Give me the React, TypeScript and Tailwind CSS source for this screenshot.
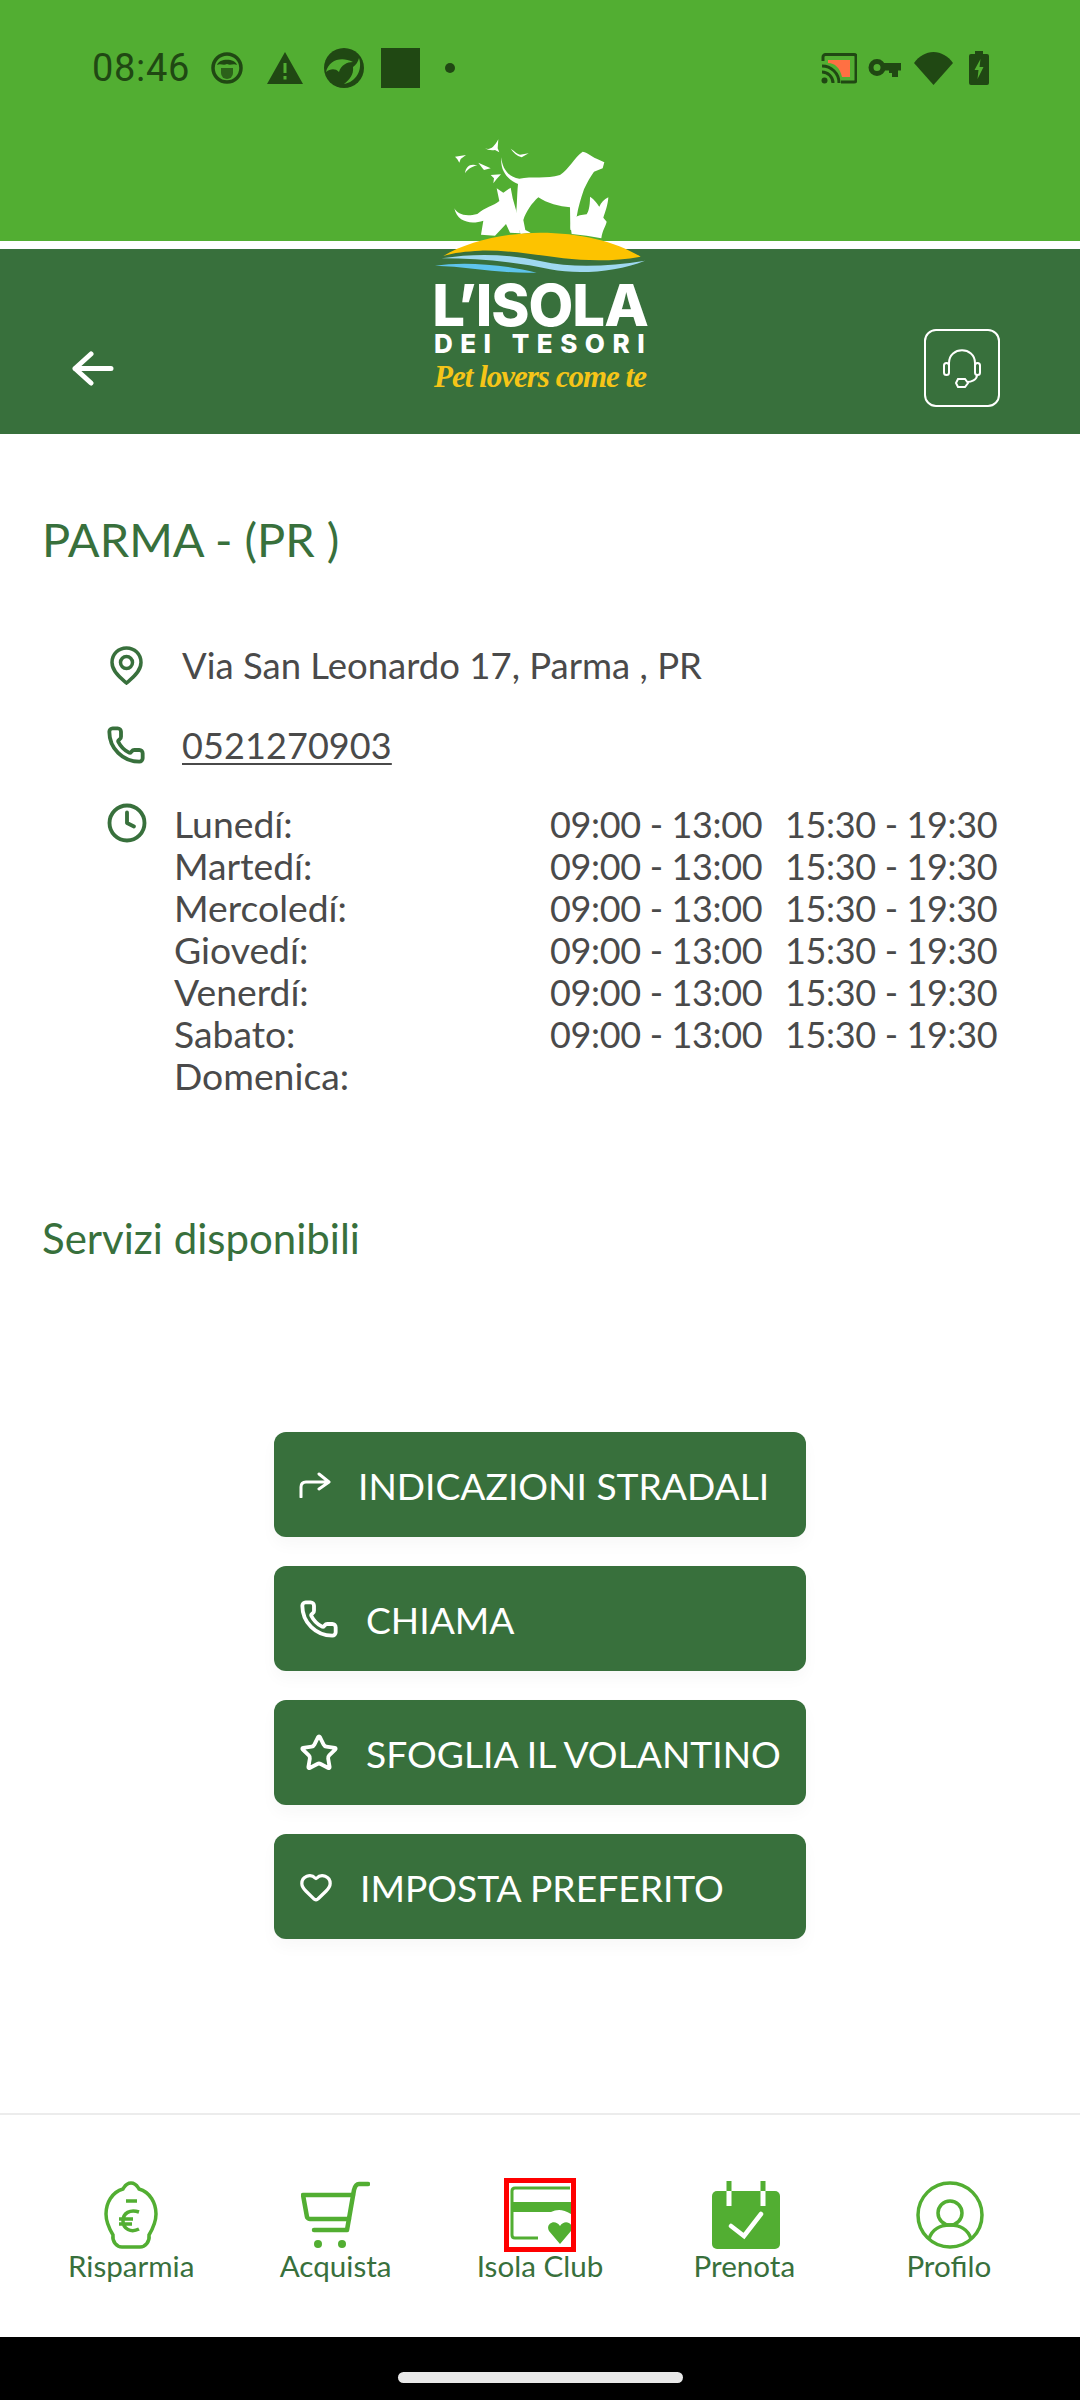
import { Clock, Heart, Phone, Star } from 'lucide-react'

const hours = [
  { day: 'Lunedí:', am: '09:00 - 13:00', pm: '15:30 - 19:30' },
  { day: 'Martedí:', am: '09:00 - 13:00', pm: '15:30 - 19:30' },
  { day: 'Mercoledí:', am: '09:00 - 13:00', pm: '15:30 - 19:30' },
  { day: 'Giovedí:', am: '09:00 - 13:00', pm: '15:30 - 19:30' },
  { day: 'Venerdí:', am: '09:00 - 13:00', pm: '15:30 - 19:30' },
  { day: 'Sabato:', am: '09:00 - 13:00', pm: '15:30 - 19:30' },
  { day: 'Domenica:', am: '', pm: '' },
]

function StatusLeft() {
  return (
    <div className="flex items-center">
      <span className="w-[97px] text-[38px] leading-[48px] tracking-[0.7px] text-[#204813] font-['Roboto',sans-serif]">08:46</span>
      <svg className="ml-[22px] w-[32px] h-[32px]" viewBox="0 0 32 32">
        <circle cx="16" cy="16" r="14" fill="none" stroke="#204813" strokeWidth="3.5" />
        <path d="M6 13 C8 6 24 6 26 13 C22 11 20 14 16 12 C12 14 10 11 6 13 Z" fill="#204813" />
        <path d="M10 16 h12 v5 a6 6 0 0 1 -12 0 Z" fill="#204813" opacity="0.75" />
      </svg>
      <svg className="ml-[24px] w-[36px] h-[32px]" viewBox="0 0 36 32">
        <path d="M18 0 L36 32 H0 Z" fill="#204813" />
        <rect x="16.5" y="11" width="3" height="10" fill="#52ae32" />
        <rect x="16.5" y="24" width="3" height="3.5" fill="#52ae32" />
      </svg>
      <svg className="ml-[21px] w-[40px] h-[40px]" viewBox="0 0 40 40">
        <circle cx="20" cy="20" r="20" fill="#204813" />
        <path d="M2 24 C5 12 17 8 29 14 C23 14 17 17 15 24 C11 20 6 21 2 24 Z" fill="#52ae32" />
        <path d="M35 10 C39 22 32 34 20 36 C25 32 30 27 29 19 C32 17 34 14 35 10 Z" fill="#52ae32" />
      </svg>
      <div className="ml-[17px] w-[39px] h-[40px] bg-[#204813]" />
      <div className="ml-[25px] w-[10px] h-[10px] rounded-full bg-[#204813]" />
    </div>
  )
}

function StatusRight() {
  return (
    <div className="flex items-center">
      <svg className="w-[36px] h-[31px]" viewBox="0 0 36 31">
        <path d="M2 8 V4 a2.5 2.5 0 0 1 2.5 -2.5 H33 a2 2 0 0 1 2 2 V27 a2 2 0 0 1 -2 2 H20" fill="none" stroke="#204813" strokeWidth="3" />
        <path d="M7 7 H29 V24 H21 C19 15 14 10 7 10 Z" fill="#ff7043" />
        <path d="M1 13 C10 13 18 20 18 30 M1 19 C7 19 12 24 12 30" fill="none" stroke="#204813" strokeWidth="3" />
        <circle cx="3.5" cy="27.5" r="3" fill="#204813" />
      </svg>
      <svg className="ml-[11px] w-[33px] h-[20px]" viewBox="0 0 33 20">
        <circle cx="9" cy="9.5" r="6" fill="none" stroke="#204813" strokeWidth="5" />
        <path d="M14 5 H33 V12.5 H30 V19 H24 V15 H21 V12.5 H14 Z" fill="#204813" />
      </svg>
      <svg className="ml-[13px] w-[39px] h-[33px]" viewBox="0 0 39 33">
        <path d="M19.5 33 L0 11 C5 4 12 0 19.5 0 C27 0 34 4 39 11 Z" fill="#204813" />
      </svg>
      <svg className="ml-[16px] w-[20px] h-[34px]" viewBox="0 0 20 34">
        <path d="M6 0 H14 V3 H18 a2 2 0 0 1 2 2 V32 a2 2 0 0 1 -2 2 H2 a2 2 0 0 1 -2 -2 V5 a2 2 0 0 1 2 -2 H6 Z" fill="#204813" />
        <path d="M11.5 8 L5.5 19 H9.5 L8.5 28 L14.5 16 H10.5 Z" fill="#52ae32" />
      </svg>
    </div>
  )
}

function Logo() {
  return (
    <div className="absolute left-1/2 top-[120px] -translate-x-1/2 w-[280px] flex flex-col items-center">
      <svg className="w-[280px] h-[165px]" viewBox="0 0 840 495">
        <g fill="#ffffff">
          <path d="M304 112 C306 145 325 172 358 176 C395 168 440 178 480 165 C505 150 525 110 548 95 C565 98 575 110 590 116 L613 127 L608 145 L582 155 C572 170 562 185 552 208 C542 238 535 260 530 290 L527 325 L511 330 L510 262 C480 260 440 250 415 232 C395 250 378 275 370 300 L376 330 L392 338 L362 342 L345 300 C352 270 350 230 354 192 C325 180 300 155 304 112 Z" />
          <path d="M163 265 C172 282 195 292 232 282 C255 262 280 258 298 243 L290 205 L310 218 L332 203 L338 235 L348 270 L360 340 L330 338 L318 312 L285 347 L243 344 L250 302 C215 314 172 308 163 265 Z" />
          <path d="M512 322 C512 295 530 285 560 283 C565 275 570 262 570 230 C585 240 592 252 598 260 C603 248 612 238 625 232 C624 255 614 280 610 293 L620 305 C617 320 607 330 604 355 L560 347 L515 342 Z" />
          <path d="M255 85 C270 90 280 85 295 58 L293 85 L298 97 L285 90 C275 92 262 90 255 85 Z" />
          <path d="M332 86 C345 95 352 102 360 104 L386 100 L365 112 C350 108 340 98 332 86 Z" />
          <path d="M165 110 L198 105 L182 117 L178 128 L172 118 Z" />
          <path d="M195 160 C198 138 210 130 232 136 C215 140 205 146 195 160 Z" />
          <path d="M235 128 L272 145 L252 150 L245 142 Z" />
          <path d="M272 165 L303 163 L290 177 L280 190 L282 175 Z" />
        </g>
        <path d="M130 408 C200 365 320 338 420 338 C540 338 650 365 722 410 C640 425 560 422 490 415 C400 403 320 390 240 392 C200 394 160 398 130 408 Z" fill="#fdc300" />
        <path d="M125 415 C230 398 330 403 420 423 C520 445 620 440 735 422 C650 455 540 465 450 448 C350 425 230 415 125 415 Z" fill="#9fd8f0" />
        <path d="M105 437 C180 425 300 430 410 458 C310 462 210 440 105 437 Z" fill="#5ec4ec" />
      </svg>
      <div className="text-[58px] leading-[40px] font-extrabold text-white tracking-[-1px] font-['Inter',sans-serif] whitespace-nowrap">L’ISOLA</div>
      <div className="mt-[10px] pl-[6px] text-[26px] leading-[18px] font-extrabold text-white tracking-[7.5px] font-['Inter',sans-serif] whitespace-nowrap">DEI TESORI</div>
      <div className="mt-[8px] text-[31px] leading-[32px] font-bold italic text-[#f5c518] tracking-[-1px] font-['Liberation_Serif',serif] whitespace-nowrap">Pet lovers come te</div>
    </div>
  )
}

function BackArrow() {
  return (
    <svg className="w-[42px] h-[35px]" viewBox="0 0 42 35" fill="none" stroke="#ffffff" strokeWidth="5" strokeLinecap="round" strokeLinejoin="round">
      <path d="M19 3 L3 17.5 L19 32 M3 17.5 H39" />
    </svg>
  )
}

function HeadsetIcon() {
  return (
    <svg className="w-[38px] h-[40px]" viewBox="0 0 38 40" fill="none" stroke="#ffffff" strokeWidth="2">
      <path d="M6 17 V15 C6 -2 32 -2 32 15 V17" />
      <rect x="1" y="15" width="5" height="12" rx="2.5" />
      <rect x="32" y="15" width="5" height="12" rx="2.5" />
      <path d="M34 27 C34 32 28 34 24 34" />
      <path d="M15 31 H22 L25 35 L22 39 H15 L13 35 Z" />
    </svg>
  )
}

function PinIcon() {
  return (
    <svg className="w-[33px] h-[39px]" viewBox="0 0 33 39" fill="none" stroke="#38703c" strokeWidth="3.5">
      <path d="M16.5 37 C12 33 2 26 2 16.5 C2 8 8.5 2 16.5 2 C24.5 2 31 8 31 16.5 C31 26 21 33 16.5 37 Z" />
      <circle cx="16.5" cy="16.5" r="6" />
    </svg>
  )
}

function TurnIcon() {
  return (
    <svg className="w-[32px] h-[26px]" viewBox="0 0 32 26" fill="none" stroke="#ffffff" strokeWidth="3" strokeLinecap="round" strokeLinejoin="round">
      <path d="M2 25 V15 C2 11 4 10 7 10 H29 M20 2 L30 10 L20 17" />
    </svg>
  )
}

const actions = [
  { label: 'INDICAZIONI STRADALI', icon: <TurnIcon /> },
  { label: 'CHIAMA', icon: <Phone className="w-[40px] h-[40px]" strokeWidth={2.3} /> },
  { label: 'SFOGLIA IL VOLANTINO', icon: <Star className="w-[40px] h-[40px]" strokeWidth={2.3} /> },
  { label: 'IMPOSTA PREFERITO', icon: <Heart className="w-[34px] h-[34px]" strokeWidth={2.3} /> },
]

function LemonIcon() {
  return (
    <svg className="w-[54px] h-[68px]" viewBox="0 0 54 68" fill="none" stroke="#52ae32" strokeWidth="3.5">
      <path d="M27 2 C32 2 33 5 35 8 C46 11 52 22 52 33 C52 42 48 49 45 54 C46 61 41 66 36 66 H18 C13 66 8 61 9 54 C6 49 2 42 2 33 C2 22 8 11 19 8 C21 5 22 2 27 2 Z" />
      <path d="M22 20 H33" />
      <path d="M35 31 C26 28 19 32 19 40 C19 48 27 52 35 48 M15 38 H29 M15 43 H28" />
    </svg>
  )
}

function CartIcon() {
  return (
    <svg className="w-[69px] h-[68px]" viewBox="0 0 69 68" fill="none" stroke="#52ae32" strokeWidth="4.5" strokeLinecap="round" strokeLinejoin="round">
      <path d="M67 3 H58 C55 3 54 5 53 9 L46 49 H13" />
      <path d="M52 14 H2 L6 36 C6 37 8 38 9 38 H48" />
      <circle cx="17" cy="63" r="4" fill="#52ae32" stroke="none" />
      <circle cx="41" cy="63" r="4" fill="#52ae32" stroke="none" />
    </svg>
  )
}

function CardIcon() {
  return (
    <div className="w-[72px] h-[74px] border-[5px] border-[#ff0000]">
      <svg className="w-[62px] h-[64px]" viewBox="0 0 62 64" fill="none">
        <path d="M61 5 H6 C4 5 3 6 3 8 V52 C3 54 4 55 6 55 H29" stroke="#52ae32" strokeWidth="3" />
        <path d="M2 19 H62 V31 C54 26 48 26 42 29 H2 Z" fill="#52ae32" />
        <path d="M51 61 L40 48 C36 41 46 35 51 43 C56 35 66 41 62 48 Z" fill="#52ae32" />
      </svg>
    </div>
  )
}

function CalendarIcon() {
  return (
    <svg className="ml-[3px] w-[68px] h-[68px]" viewBox="0 0 68 68">
      <rect x="0" y="10" width="68" height="58" rx="5" fill="#52ae32" />
      <path d="M17 0 V25 M51 0 V25" stroke="#ffffff" strokeWidth="5" />
      <path d="M17 0 V10 M51 0 V10" stroke="#52ae32" strokeWidth="5" />
      <path d="M19 45 L32 55 L49 33" stroke="#ffffff" strokeWidth="4.5" fill="none" strokeLinecap="round" />
    </svg>
  )
}

function ProfileIcon() {
  return (
    <svg className="ml-[2px] w-[68px] h-[68px]" viewBox="0 0 68 68" fill="none" stroke="#52ae32" strokeWidth="3.5">
      <circle cx="34" cy="34" r="32" />
      <circle cx="34" cy="32" r="12" />
      <path d="M13 58 C16 48 25 44 34 44 C43 44 52 48 55 58" />
    </svg>
  )
}

const navItems = [
  { label: 'Risparmia', icon: <LemonIcon /> },
  { label: 'Acquista', icon: <CartIcon /> },
  { label: 'Isola Club', icon: <CardIcon /> },
  { label: 'Prenota', icon: <CalendarIcon /> },
  { label: 'Profilo', icon: <ProfileIcon /> },
]

export default function App() {
  return (
    <div className="relative flex flex-col w-full h-[2400px] bg-white font-['Lato',sans-serif] text-[#4a4a4a] overflow-hidden">
      <header>
        <div className="h-[241px] bg-[#52ae32] pt-[44px]">
          <div className="flex items-center justify-between h-[48px] pl-[92px] pr-[91px]">
            <StatusLeft />
            <StatusRight />
          </div>
        </div>
        <div className="h-[8px] bg-white" />
        <div className="h-[185px] bg-[#38703c] flex items-start justify-between pl-[72px] pr-[80px] pt-[80px]">
          <div className="pt-[22px]">
            <BackArrow />
          </div>
          <button className="w-[76px] h-[78px] rounded-[12px] border-2 border-white flex items-center justify-center">
            <HeadsetIcon />
          </button>
        </div>
        <Logo />
      </header>

      <main className="flex-1 pt-[77px]">
        <h1 className="pl-[42px] text-[47px] leading-[56px] text-[#38703c]">PARMA - (PR )</h1>

        <div className="mt-[76px] pl-[110px] flex items-center h-[44px] text-[36.5px]">
          <PinIcon />
          <span className="ml-[39px]">Via San Leonardo 17, Parma , PR</span>
        </div>
        <div className="mt-[36px] pl-[106px] flex items-center h-[44px] text-[36px]">
          <Phone className="w-[40px] h-[40px] text-[#38703c]" strokeWidth={2.3} />
          <span className="ml-[36px] underline underline-offset-[4px] decoration-2 tracking-[0.1px]">0521270903</span>
        </div>

        <div className="mt-[36px] pl-[106px] flex items-start text-[36px] leading-[42px]">
          <Clock className="w-[42px] h-[42px] -mt-[1px] text-[#38703c]" strokeWidth={2.2} />
          <div className="ml-[26px] grid grid-cols-[376px_235px_auto]">
            {hours.map((row) => (
              <div key={row.day} className="contents">
                <span className="text-[37.3px]">{row.day}</span>
                <span className="tracking-[-0.35px]">{row.am}</span>
                <span className="tracking-[-0.35px]">{row.pm}</span>
              </div>
            ))}
          </div>
        </div>

        <h2 className="mt-[117px] pl-[42px] text-[42px] leading-[48px] text-[#38703c]">Servizi disponibili</h2>

        <div className="mt-[170px] flex flex-col items-center gap-[29px]">
          {actions.map((action) => (
            <div key={action.label} className="flex items-center gap-[27px] w-[532px] h-[105px] pl-[25px] rounded-[12px] bg-[#38703c] text-white shadow-[0_8px_16px_rgba(0,0,0,0.03)]">
              {action.icon}
              <span className="text-[37.2px] leading-[44px] pt-[3px] whitespace-nowrap">{action.label}</span>
            </div>
          ))}
        </div>
      </main>

      <nav className="h-[224px] border-t-2 border-[#ececec] pt-[66px] px-[29px] grid grid-cols-5">
        {navItems.map((item) => (
          <div key={item.label} className="flex flex-col items-center">
            <div className="h-[68px] flex items-center justify-center">{item.icon}</div>
            <span className="text-[29.6px] leading-[34px] text-[#38703c] whitespace-nowrap">{item.label}</span>
          </div>
        ))}
      </nav>

      <div className="h-[63px] bg-black flex justify-center pt-[35px]">
        <div className="w-[285px] h-[11px] rounded-full bg-[#e8e8e8]" />
      </div>
    </div>
  )
}
